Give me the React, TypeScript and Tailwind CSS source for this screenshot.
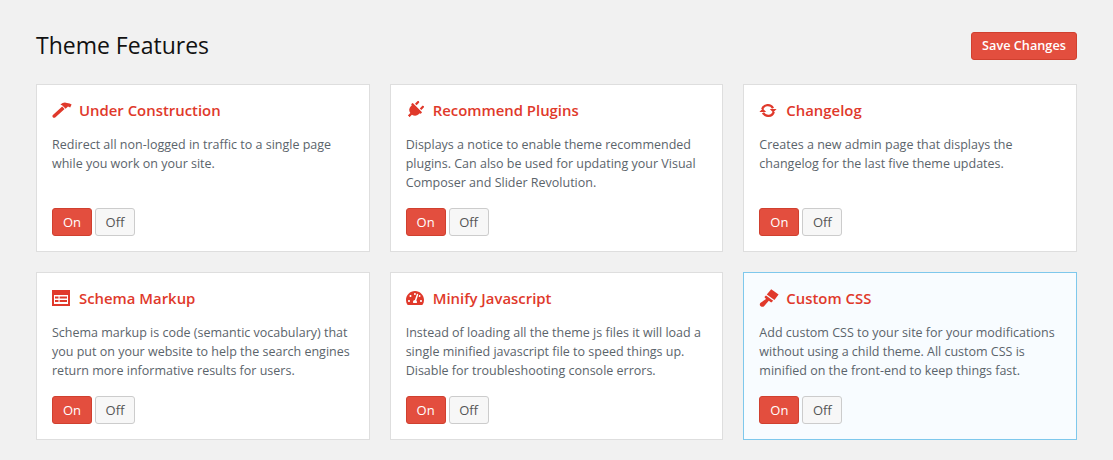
import React from "react";
import { FaPlug, FaTachometerAlt } from "react-icons/fa";

const Hammer = () => (
  <svg viewBox="0 0 20 16" className="w-[20px] h-[16px]" fill="currentColor">
    <path d="M.9 13 10.2 4.6 12.6 7 3.2 15.4C2.5 16 1.6 16 1 15.4 .3 14.8.2 13.7.9 13Z" />
    <path d="M8.4 2.4C10.6.6 13-.2 15 1L17.6 1.4 19.6 2.4 18.2 5.4 16 4.4 13.6 6.8 10.4 3.6C9.8 3 9.1 2.6 8.4 2.4Z" />
  </svg>
);

const Sync = () => (
  <svg viewBox="0 0 18 15" className="w-[18px] h-[15px]">
    <path d="M3.2 6.2A5.9 5.9 0 0 1 14 5.2M14.8 8.8A5.9 5.9 0 0 1 4 9.8" fill="none" stroke="currentColor" strokeWidth="2.3" />
    <path d="M10.8 6H17.6L14.2 9.6ZM.4 9H7.2L3.8 5.4Z" fill="currentColor" />
  </svg>
);

const Schema = () => (
  <svg viewBox="0 0 18 16" className="w-[18px] h-[16px]" fill="currentColor">
    <path fillRule="evenodd" d="M0 0H18V16H0ZM2 5V14H16V5ZM3 6.4H6.5V8.4H3ZM7.6 6.4H15V8.4H7.6ZM3 10H6.5V12H3ZM7.6 10H15V12H7.6Z" />
  </svg>
);

const Brush = () => (
  <svg viewBox="0 0 20 18" className="w-[20px] h-[18px]" fill="currentColor">
    <path d="M12.2 .2 19.6 5.4 15.4 11 7.8 5.4Z" />
    <path d="M7 6.4 14.2 11.8 12.2 13.4 9.8 11.8 4.8 17.4C3.4 18.2 1.8 17.6 1 16.4.6 15.4.8 14.4 1.6 13.8L7 10 5.4 8Z" />
  </svg>
);

const cards: { title: string; icon: React.ReactNode; text: string[]; active?: boolean }[] = [
  { title: "Under Construction", icon: <Hammer />, text: ["Redirect all non-logged in traffic to a single page", "while you work on your site."] },
  { title: "Recommend Plugins", icon: <FaPlug className="w-[18px] h-[18px] rotate-45" />, text: ["Displays a notice to enable theme recommended", "plugins. Can also be used for updating your Visual", "Composer and Slider Revolution."] },
  { title: "Changelog", icon: <Sync />, text: ["Creates a new admin page that displays the", "changelog for the last five theme updates."] },
  { title: "Schema Markup", icon: <Schema />, text: ["Schema markup is code (semantic vocabulary) that", "you put on your website to help the search engines", "return more informative results for users."] },
  { title: "Minify Javascript", icon: <FaTachometerAlt className="w-[18px] h-[18px]" />, text: ["Instead of loading all the theme js files it will load a", "single minified javascript file to speed things up.", "Disable for troubleshooting console errors."] },
  { title: "Custom CSS", icon: <Brush />, text: ["Add custom CSS to your site for your modifications", "without using a child theme. All custom CSS is", "minified on the front-end to keep things fast."], active: true },
];

export default function App() {
  return (
    <div className="min-h-[460px] bg-[#f1f1f1] px-9 pt-8 font-['Open_Sans',sans-serif]">
      <div className="flex items-center justify-between h-[28px] mb-6">
        <h1 className="text-[23px] leading-[28px] -mt-[2px] text-[#111111] font-normal">Theme Features</h1>
        <button className="h-[28px] w-[106px] rounded-[3px] bg-[#e34e3e] border border-[#d0402f] text-white text-[12.7px] font-semibold">Save Changes</button>
      </div>
      <div className="grid grid-cols-3 gap-5">
        {cards.map((c) => (
          <div key={c.title} className={`h-[168px] border px-[15px] pt-[14px] flex flex-col ${c.active ? "bg-[#f8fcff] border-[#7ec8ec]" : "bg-white border-[#dedede]"}`}>
            <div className="flex items-center h-[22px] text-[#e0392b]">
              <span className="w-[27px] flex items-center shrink-0">{c.icon}</span>
              <h3 className="text-[14.9px] font-semibold leading-[22px]">{c.title}</h3>
            </div>
            <p className="mt-[14px] text-[12.5px] leading-[19px] text-[#5b646b] whitespace-nowrap">
              {c.text.map((t) => (
                <span key={t} className="block">{t}</span>
              ))}
            </p>
            <div className="mt-auto mb-[15px] flex gap-[3px]">
              <button className="h-[28px] w-[40px] pt-px rounded-[3px] bg-[#e34e3e] border border-[#d0402f] text-white text-[13px]">On</button>
              <button className="h-[28px] w-[40px] pt-px rounded-[3px] bg-[#f7f7f7] border border-[#cccccc] text-[#555555] text-[13px]">Off</button>
            </div>
          </div>
        ))}
      </div>
    </div>
  );
}
